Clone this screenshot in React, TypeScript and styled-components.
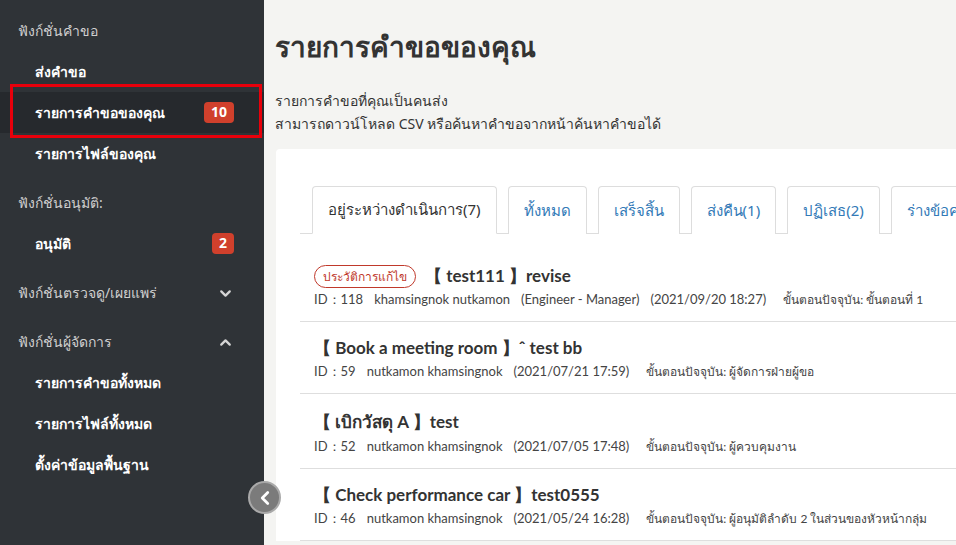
import React from "react";
import styled, { createGlobalStyle } from "styled-components";
import { ChevronDown, ChevronUp, ChevronLeft } from "lucide-react";

const Global = createGlobalStyle`
  html, body { margin: 0; padding: 0; height: 100%; overflow: hidden; }
  body { font-family: "Noto Sans", "Open Sans", sans-serif; }
  #root { height: 100%; }
  * { box-sizing: border-box; }
`;

const Page = styled.div`
  display: flex;
  height: 100vh;
  width: 100vw;
  overflow: hidden;
  background: #f4f4f2;
`;

const Sidebar = styled.nav`
  position: relative;
  flex: 0 0 264px;
  background: #2f3337;
  padding-top: 11px;
  display: flex;
  flex-direction: column;
  gap: 9px;
  z-index: 2;
`;

const Group = styled.div`
  display: flex;
  flex-direction: column;
`;

const GroupHeader = styled.div`
  height: 40px;
  display: flex;
  align-items: center;
  justify-content: space-between;
  padding: 0 30px 0 18px;
  color: #cfcfcf;
  font-size: 14px;
  svg { color: #d5d5d5; }
`;

const NavItem = styled.div<{ $active?: boolean }>`
  position: relative;
  height: 41px;
  display: flex;
  align-items: center;
  justify-content: space-between;
  padding: 0 30px 0 35px;
  color: #ffffff;
  font-size: 14px;
  font-weight: 600;
  background: ${(p) => (p.$active ? "#26292d" : "transparent")};
`;

const Highlight = styled.span`
  position: absolute;
  left: 10px;
  right: 2px;
  top: -8px;
  bottom: -5px;
  border: 3px solid #e8000b;
  pointer-events: none;
`;

const Badge = styled.span`
  background: #d0402c;
  color: #fff;
  font-size: 14px;
  font-weight: 700;
  line-height: 1;
  padding: 3px 7px 4px;
  border-radius: 4px;
`;

const CollapseButton = styled.button`
  position: absolute;
  right: -17px;
  top: 481px;
  width: 33px;
  height: 33px;
  border-radius: 50%;
  background: #7b7b7b;
  border: 2px solid #a9a9a9;
  display: flex;
  align-items: center;
  justify-content: center;
  padding: 0;
  color: #fff;
`;

const Main = styled.main`
  flex: 1 1 auto;
  min-width: 0;
  overflow: hidden;
  padding: 27px 0 0 11px;
  color: #333;
`;

const Title = styled.h1`
  margin: 0;
  font-size: 28px;
  font-weight: 700;
  line-height: 38px;
  color: #333;
`;

const Description = styled.p`
  margin: 24px 0 14px;
  font-size: 14px;
  line-height: 23px;
  color: #333;
`;

const Card = styled.section`
  margin-left: 1px;
  width: 900px;
  background: #fff;
  border-radius: 4px 0 0 0;
  padding: 37px 0 0 24px;
`;

const TabList = styled.div`
  display: flex;
  gap: 11px;
  padding-left: 12px;
  border-bottom: 1px solid #dddddd;
  white-space: nowrap;
`;

const Tab = styled.div<{ $active?: boolean }>`
  height: 48px;
  display: flex;
  align-items: center;
  padding: 0 15px;
  border: 1px solid #dddddd;
  border-bottom: ${(p) => (p.$active ? "1px solid #fff" : "none")};
  margin-bottom: -1px;
  border-radius: 4px 4px 0 0;
  font-size: 15px;
  color: ${(p) => (p.$active ? "#333" : "#337ab7")};
  background: #fff;
`;

const List = styled.div`
  margin-top: 16px;
  display: flex;
  flex-direction: column;
`;

const Row = styled.div`
  padding: 14px 14px 13px 14px;
  border-bottom: 1px solid #dedede;
  display: flex;
  flex-direction: column;
  gap: 3px;
`;

const TitleLine = styled.div`
  display: flex;
  align-items: center;
  gap: 9px;
  min-height: 24px;
`;

const RowTitle = styled.span`
  font-family: "Lato", "Noto Sans", sans-serif;
  font-size: 17px;
  font-weight: 700;
  color: #333;
  white-space: nowrap;
`;

const Pill = styled.span`
  border: 1px solid #c0392b;
  color: #c0392b;
  border-radius: 12px;
  font-size: 12px;
  height: 23px;
  padding: 0 8px;
  display: inline-flex;
  align-items: center;
`;

const Meta = styled.div`
  display: flex;
  align-items: baseline;
  gap: 11px;
  font-family: "Lato", "Noto Sans", sans-serif;
  font-size: 13px;
  line-height: 17px;
  color: #444;
  white-space: nowrap;
`;

const Step = styled.span`
  margin-left: 6px;
  font-size: 12px;
`;

type Req = {
  id: number;
  title: string;
  revise?: boolean;
  who: string[];
  date: string;
  step: string;
};

const requests: Req[] = [
  {
    id: 118,
    title: "【 test111 】revise",
    revise: true,
    who: ["khamsingnok nutkamon", "(Engineer - Manager)"],
    date: "(2021/09/20 18:27)",
    step: "ขั้นตอนปัจจุบัน: ขั้นตอนที่ 1",
  },
  {
    id: 59,
    title: "【 Book a meeting room 】ˆ test bb",
    who: ["nutkamon khamsingnok"],
    date: "(2021/07/21 17:59)",
    step: "ขั้นตอนปัจจุบัน: ผู้จัดการฝ่ายผู้ขอ",
  },
  {
    id: 52,
    title: "【 เบิกวัสดุ A 】test",
    who: ["nutkamon khamsingnok"],
    date: "(2021/07/05 17:48)",
    step: "ขั้นตอนปัจจุบัน: ผู้ควบคุมงาน",
  },
  {
    id: 46,
    title: "【 Check performance car 】test0555",
    who: ["nutkamon khamsingnok"],
    date: "(2021/05/24 16:28)",
    step: "ขั้นตอนปัจจุบัน: ผู้อนุมัติลำดับ 2 ในส่วนของหัวหน้ากลุ่ม",
  },
];

const tabs = [
  "อยู่ระหว่างดำเนินการ(7)",
  "ทั้งหมด",
  "เสร็จสิ้น",
  "ส่งคืน(1)",
  "ปฏิเสธ(2)",
  "ร่างข้อความ",
];

export default function App() {
  return (
    <Page>
      <Global />
      <Sidebar>
        <Group>
          <GroupHeader>ฟังก์ชั่นคำขอ</GroupHeader>
          <NavItem>ส่งคำขอ</NavItem>
          <NavItem $active>
            รายการคำขอของคุณ
            <Badge>10</Badge>
            <Highlight />
          </NavItem>
          <NavItem>รายการไฟล์ของคุณ</NavItem>
        </Group>
        <Group>
          <GroupHeader>ฟังก์ชั่นอนุมัติ:</GroupHeader>
          <NavItem>
            อนุมัติ
            <Badge>2</Badge>
          </NavItem>
        </Group>
        <Group>
          <GroupHeader>
            ฟังก์ชั่นตรวจดู/เผยแพร่
            <ChevronDown size={17} strokeWidth={3.2} />
          </GroupHeader>
        </Group>
        <Group>
          <GroupHeader>
            ฟังก์ชั่นผู้จัดการ
            <ChevronUp size={17} strokeWidth={3.2} />
          </GroupHeader>
          <NavItem>รายการคำขอทั้งหมด</NavItem>
          <NavItem>รายการไฟล์ทั้งหมด</NavItem>
          <NavItem>ตั้งค่าข้อมูลพื้นฐาน</NavItem>
        </Group>
        <CollapseButton aria-label="collapse">
          <ChevronLeft size={22} strokeWidth={3} />
        </CollapseButton>
      </Sidebar>
      <Main>
        <Title>รายการคำขอของคุณ</Title>
        <Description>
          รายการคำขอที่คุณเป็นคนส่ง
          <br />
          สามารถดาวน์โหลด CSV หรือค้นหาคำขอจากหน้าค้นหาคำขอได้
        </Description>
        <Card>
          <TabList>
            {tabs.map((t, i) => (
              <Tab key={t} $active={i === 0}>
                {t}
              </Tab>
            ))}
          </TabList>
          <List>
            {requests.map((r) => (
              <Row key={r.id}>
                <TitleLine>
                  {r.revise && <Pill>ประวัติการแก้ไข</Pill>}
                  <RowTitle>{r.title}</RowTitle>
                </TitleLine>
                <Meta>
                  <span>ID：{r.id}</span>
                  {r.who.map((w) => (
                    <span key={w}>{w}</span>
                  ))}
                  <span>{r.date}</span>
                  <Step>{r.step}</Step>
                </Meta>
              </Row>
            ))}
          </List>
        </Card>
      </Main>
    </Page>
  );
}
